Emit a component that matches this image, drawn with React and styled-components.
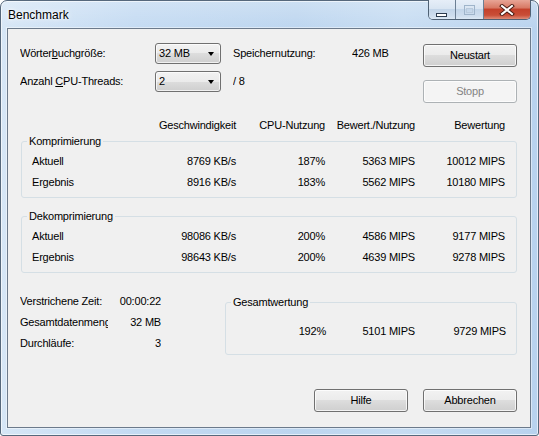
import React from "react";
import styled, { createGlobalStyle } from "styled-components";

const GlobalStyle = createGlobalStyle`
  html, body {
    margin: 0;
    padding: 0;
    background: #ffffff;
  }
  body {
    font-family: "Liberation Sans", Arial, sans-serif;
  }
`;

const Window = styled.div`
  box-sizing: border-box;
  width: 539px;
  height: 436px;
  display: flex;
  flex-direction: column;
  padding: 0 7px 7px 6px;
  border: 1px solid #56687c;
  border-radius: 7px 7px 3px 3px;
  background:
    linear-gradient(to bottom, rgba(255, 255, 255, 0.25), rgba(255, 255, 255, 0) 30px),
    linear-gradient(to right, #d6e6f6 0%, #c3daf2 25%, #bcd5ef 55%, #c6dcf2 75%, #b8d2ee 100%);
  box-shadow: inset 0 0 0 1px rgba(255, 255, 255, 0.6);
`;

const TitleBar = styled.div`
  height: 27px;
  display: flex;
  justify-content: space-between;
  align-items: flex-start;
  flex-shrink: 0;
`;

const Title = styled.div`
  margin: 7px 0 0 1px;
  font-size: 12px;
  line-height: 14px;
  color: #000;
  text-shadow: 0 0 6px #ffffff, 0 0 3px #ffffff;
`;

const CaptionGroup = styled.div`
  display: flex;
  margin-top: -1px;
  height: 20px;
  box-sizing: border-box;
  border: 1px solid #4f6174;
  border-top: none;
  border-radius: 0 0 5px 5px;
  overflow: hidden;
`;

const CaptionButton = styled.div`
  width: ${(p) => p.$w}px;
  display: flex;
  align-items: center;
  justify-content: center;
  border-left: ${(p) => (p.$first ? "none" : "1px solid #6c7f94")};
  background: ${(p) =>
    p.$close
      ? "linear-gradient(to bottom, #e8a596 0%, #d87a66 40%, #c4412b 50%, #c94e37 80%, #de8c78 100%)"
      : "linear-gradient(to bottom, #e6eef8 0%, #d9e5f2 45%, #c3d5e9 50%, #cfdeee 85%, #dde9f5 100%)"};
`;

const Client = styled.div`
  flex: 1;
  display: flex;
  flex-direction: column;
  padding: 0 13px 15px 12px;
  border: 1px solid #6c7a8b;
  background: #f0f0f0;
  box-shadow: 0 0 0 1px rgba(255, 255, 255, 0.45);
  font-size: 11px;
  letter-spacing: -0.2px;
  color: #000;
`;

const TopSection = styled.div`
  display: flex;
  margin-top: 14px;
`;

const SettingsGrid = styled.div`
  flex: 1;
  display: grid;
  grid-template-columns: 135px 78px 119px 1fr;
  grid-auto-rows: 21px;
  row-gap: 7px;
`;

const Cell = styled.div`
  display: flex;
  align-items: center;
  white-space: nowrap;
  overflow: hidden;
  line-height: 13px;
`;

const Key = styled.span`
  text-decoration: underline;
  text-underline-offset: 1px;
`;

const Combo = styled.div`
  box-sizing: border-box;
  width: 66px;
  height: 21px;
  display: flex;
  align-items: center;
  justify-content: space-between;
  padding: 0 6px 0 3px;
  border: 1px solid #707070;
  border-radius: 3px;
  background: linear-gradient(to bottom, #f2f2f2 0%, #ebebeb 50%, #dddddd 50%, #cfcfcf 100%);
  box-shadow: inset 0 0 0 1px rgba(255, 255, 255, 0.7);
  line-height: 13px;
`;

const Arrow = styled.span`
  width: 0;
  height: 0;
  border-left: 3.5px solid transparent;
  border-right: 3.5px solid transparent;
  border-top: 4px solid #000;
  margin-top: 1px;
`;

const ButtonColumn = styled.div`
  display: flex;
  flex-direction: column;
  gap: 13px;
  margin-top: 1px;
`;

const Button = styled.div`
  box-sizing: border-box;
  width: 94px;
  height: 23px;
  display: flex;
  align-items: center;
  justify-content: center;
  border: 1px solid ${(p) => (p.$disabled ? "#adb2b5" : "#707070")};
  border-radius: 3px;
  color: ${(p) => (p.$disabled ? "#838383" : "#000")};
  background: ${(p) =>
    p.$disabled
      ? "#f4f4f4"
      : "linear-gradient(to bottom, #f2f2f2 0%, #ebebeb 50%, #dddddd 50%, #cfcfcf 100%)"};
  box-shadow: inset 0 0 0 1px rgba(255, 255, 255, 0.75);
  line-height: 13px;
`;

const ColumnGrid = styled.div`
  display: grid;
  grid-template-columns: 1fr 90px 89px 90px 90px;
  align-items: center;
  line-height: 13px;
  white-space: nowrap;
`;

const HeaderRow = styled(ColumnGrid)`
  margin-top: 16px;
  padding-right: 12px;
  height: 13px;
`;

const DataRow = styled(ColumnGrid)`
  height: 21px;
  padding: 0 11px 0 10px;
`;

const Num = styled.div`
  text-align: right;
`;

const Group = styled.fieldset`
  margin: ${(p) => p.$top}px 0 0 1px;
  padding: ${(p) => p.$pad}px 0 ${(p) => p.$pad + (p.$bottom || 0)}px 0;
  border: 1px solid #d5dfe5;
  border-radius: 3px;
  min-width: 0;
  flex: ${(p) => (p.$grow ? 1 : "none")};
`;

const Legend = styled.legend`
  margin-left: 5px;
  padding: 0 2px;
  line-height: 13px;
  font-size: 11px;
`;

const BottomSection = styled.div`
  display: flex;
  align-items: flex-start;
  margin-top: 18px;
`;

const InfoGrid = styled.div`
  display: grid;
  grid-template-columns: 88px 53px;
  grid-auto-rows: 21px;
  margin-right: 63px;
`;

const InfoValue = styled(Cell)`
  justify-content: flex-end;
`;

const SummaryRow = styled.div`
  display: grid;
  grid-template-columns: 1fr 89px 91px;
  align-items: center;
  height: 21px;
  padding-right: 10px;
  line-height: 13px;
  white-space: nowrap;
`;

const Footer = styled.div`
  margin-top: auto;
  display: flex;
  justify-content: flex-end;
  gap: 15px;
`;

const compression = [
  ["Aktuell", "8769 KB/s", "187%", "5363 MIPS", "10012 MIPS"],
  ["Ergebnis", "8916 KB/s", "183%", "5562 MIPS", "10180 MIPS"],
];

const decompression = [
  ["Aktuell", "98086 KB/s", "200%", "4586 MIPS", "9177 MIPS"],
  ["Ergebnis", "98643 KB/s", "200%", "4639 MIPS", "9278 MIPS"],
];

function Rows({ data }) {
  return data.map((row) => (
    <DataRow key={row[0]}>
      <div>{row[0]}</div>
      {row.slice(1).map((v, i) => (
        <Num key={i}>{v}</Num>
      ))}
    </DataRow>
  ));
}

function MinimizeIcon() {
  return (
    <svg width="12" height="5" viewBox="0 0 12 5">
      <rect x="0.5" y="0.5" width="10" height="3" fill="#ffffff" stroke="#2c3b4e" />
    </svg>
  );
}

function MaximizeIcon() {
  return (
    <svg width="11" height="10" viewBox="0 0 11 10">
      <rect x="0.5" y="0.5" width="10" height="9" fill="none" stroke="#9fb4ca" />
      <rect x="2.5" y="3.5" width="6" height="4" fill="none" stroke="#b9cadc" />
    </svg>
  );
}

function CloseIcon() {
  return (
    <svg width="16" height="12" viewBox="0 0 16 12">
      <path d="M3 2 L13 10 M13 2 L3 10" stroke="#4a1c14" strokeWidth="4" strokeLinecap="square" />
      <path d="M3 2 L13 10 M13 2 L3 10" stroke="#ffffff" strokeWidth="2" strokeLinecap="square" />
    </svg>
  );
}

export default function App() {
  return (
    <>
      <GlobalStyle />
      <Window>
        <TitleBar>
          <Title>Benchmark</Title>
          <CaptionGroup>
            <CaptionButton $w={26} $first>
              <div style={{ marginTop: 6 }}>
                <MinimizeIcon />
              </div>
            </CaptionButton>
            <CaptionButton $w={27}>
              <MaximizeIcon />
            </CaptionButton>
            <CaptionButton $w={46} $close>
              <CloseIcon />
            </CaptionButton>
          </CaptionGroup>
        </TitleBar>

        <Client>
          <TopSection>
            <SettingsGrid>
              <Cell>
                Wörter<Key>b</Key>uchgröße:
              </Cell>
              <Cell>
                <Combo>
                  32 MB
                  <Arrow />
                </Combo>
              </Cell>
              <Cell>Speichernutzung:</Cell>
              <Cell>426 MB</Cell>

              <Cell>
                Anzahl&nbsp;<Key>C</Key>PU-Threads:
              </Cell>
              <Cell>
                <Combo>
                  2
                  <Arrow />
                </Combo>
              </Cell>
              <Cell>/ 8</Cell>
              <Cell />
            </SettingsGrid>
            <ButtonColumn>
              <Button>Neustart</Button>
              <Button $disabled>Stopp</Button>
            </ButtonColumn>
          </TopSection>

          <HeaderRow>
            <div />
            <Num>Geschwindigkeit</Num>
            <Num>CPU-Nutzung</Num>
            <Num>Bewert./Nutzung</Num>
            <Num>Bewertung</Num>
          </HeaderRow>

          <Group $top={3} $pad={3} $bottom={1}>
            <Legend>Komprimierung</Legend>
            <Rows data={compression} />
          </Group>

          <Group $top={12} $pad={3} $bottom={1}>
            <Legend>Dekomprimierung</Legend>
            <Rows data={decompression} />
          </Group>

          <BottomSection>
            <InfoGrid>
              <Cell>Verstrichene Zeit:</Cell>
              <InfoValue>00:00:22</InfoValue>
              <Cell>Gesamtdatenmenge:</Cell>
              <InfoValue>32 MB</InfoValue>
              <Cell>Durchläufe:</Cell>
              <InfoValue>3</InfoValue>
            </InfoGrid>
            <Group $top={5} $pad={12} $grow>
              <Legend>Gesamtwertung</Legend>
              <SummaryRow>
                <Num>192%</Num>
                <Num>5101 MIPS</Num>
                <Num>9729 MIPS</Num>
              </SummaryRow>
            </Group>
          </BottomSection>

          <Footer>
            <Button>Hilfe</Button>
            <Button>Abbrechen</Button>
          </Footer>
        </Client>
      </Window>
    </>
  );
}
